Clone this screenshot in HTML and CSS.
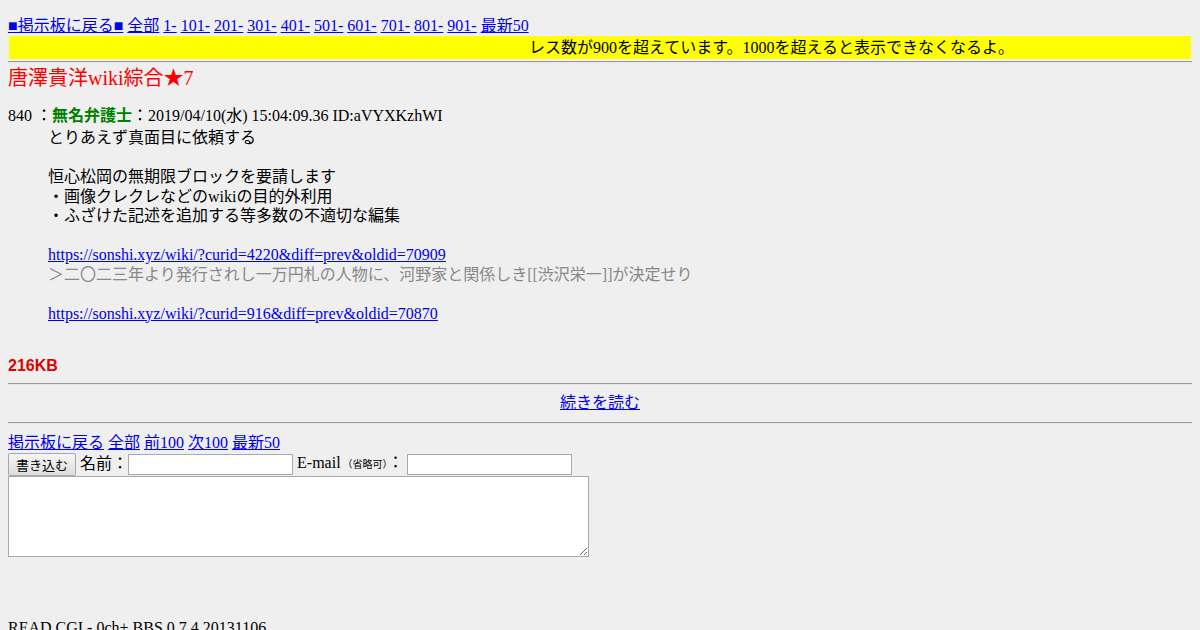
FILE: index.html
```html
<!DOCTYPE html>
<html lang="ja">
<head>
    <meta charset="UTF-8">
    <title>唐澤貴洋wiki綜合★7</title>
    <link rel="stylesheet" href="styles.css">
</head>
<body>
    <div class="top-nav">
        <a href="#">■掲示板に戻る■</a>
        <a href="#">全部</a>
        <a href="#">1-</a>
        <a href="#">101-</a>
        <a href="#">201-</a>
        <a href="#">301-</a>
        <a href="#">401-</a>
        <a href="#">501-</a>
        <a href="#">601-</a>
        <a href="#">701-</a>
        <a href="#">801-</a>
        <a href="#">901-</a>
        <a href="#">最新50</a>
    </div>
    <div class="warning">レス数が900を超えています。1000を超えると表示できなくなるよ。</div>
    <hr>
    <h1 class="thread-title">唐澤貴洋wiki綜合★7</h1>

    <dl class="thread">
        <dt>840 ：<span class="name">無名弁護士</span>：2019/04/10(水) 15:04:09.36 ID:aVYXKzhWI</dt>
        <dd>
            とりあえず真面目に依頼する<br><br>
            恒心松岡の無期限ブロックを要請します<br>
            ・画像クレクレなどのwikiの目的外利用<br>
            ・ふざけた記述を追加する等多数の不適切な編集<br><br>
            <a href="#">https://sonshi.xyz/wiki/?curid=4220&amp;diff=prev&amp;oldid=70909</a><br>
            <span class="quote">＞二〇二三年より発行されし一万円札の人物に、河野家と関係しき[[渋沢栄一]]が決定せり</span><br><br>
            <a href="#">https://sonshi.xyz/wiki/?curid=916&amp;diff=prev&amp;oldid=70870</a>
        </dd>
    </dl>

    <div class="size">216KB</div>
    <hr>
    <div class="more"><a href="#">続きを読む</a></div>
    <hr>

    <div class="bottom-nav">
        <a href="#">掲示板に戻る</a>
        <a href="#">全部</a>
        <a href="#">前100</a>
        <a href="#">次100</a>
        <a href="#">最新50</a>
    </div>
    <form class="post-form">
        <div class="form-row">
            <button type="button" class="submit">書き込む</button>
            <span class="label">名前：</span><input type="text" class="field">
            <span class="label email">E-mail<small>（省略可）</small>：</span><input type="text" class="field">
        </div>
        <textarea class="message"></textarea>
    </form>

    <div class="footer">READ.CGI - 0ch+ BBS 0.7.4 20131106</div>
</body>
</html>
```

FILE: styles.css
```css
body {
    margin: 8px;
    background: #efefef;
    color: #000;
    font-family: "Liberation Serif", "Noto Sans CJK JP", serif;
    font-size: 16px;
    line-height: 19.5px;
}

a {
    color: #0000ee;
}

hr {
    margin: 2px 0;
    border: 0;
    border-top: 1px solid #9a9a9a;
    border-bottom: 1px solid #e6e6e6;
}

.top-nav {
    margin-top: 8px;
    line-height: 20px;
}

.warning {
    margin: 0 1px;
    padding-left: 520px;
    background: #ffff00;
    line-height: 23px;
}

.thread-title {
    margin: 2px 0 0;
    color: #ff0000;
    font-size: 20px;
    font-weight: normal;
    line-height: 26px;
}

.thread {
    margin: 14px 0 0;
}

.thread dt {
    line-height: 21px;
}

.thread dd {
    margin: 2px 0 0 40px;
}

.name {
    color: #008000;
    font-weight: bold;
}

.quote {
    color: #888;
}

.size {
    margin-top: 33px;
    margin-bottom: 7px;
    color: #e00000;
    font-family: "Liberation Sans", sans-serif;
    font-weight: bold;
    line-height: 20px;
}

.more {
    text-align: center;
    padding: 6px 0 7px;
}

.bottom-nav {
    margin-top: 9px;
    line-height: 20px;
}

.post-form {
    margin: 0;
}

.form-row {
    display: flex;
    align-items: center;
    height: 23px;
}

.label {
    padding-left: 4px;
}

.email {
    padding-right: 3px;
}

.form-row small {
    font-size: 10px;
    padding-left: 2px;
}

.submit {
    height: 23px;
    padding: 0 7px;
    border: 1px solid #a8a8a8;
    border-radius: 2px;
    background: linear-gradient(#f6f6f6, #dddddd);
    font-family: "Noto Sans CJK JP", sans-serif;
    font-size: 13px;
}

.field {
    width: 161px;
    height: 17px;
    margin: 0;
    padding: 1px;
    border: 1px solid #a9a9a9;
    background: #fff;
}

.message {
    display: block;
    width: 577px;
    height: 77px;
    margin: 0;
    padding: 1px;
    border: 1px solid #a9a9a9;
    background: #fff;
}

.footer {
    margin-top: 61px;
}
```
